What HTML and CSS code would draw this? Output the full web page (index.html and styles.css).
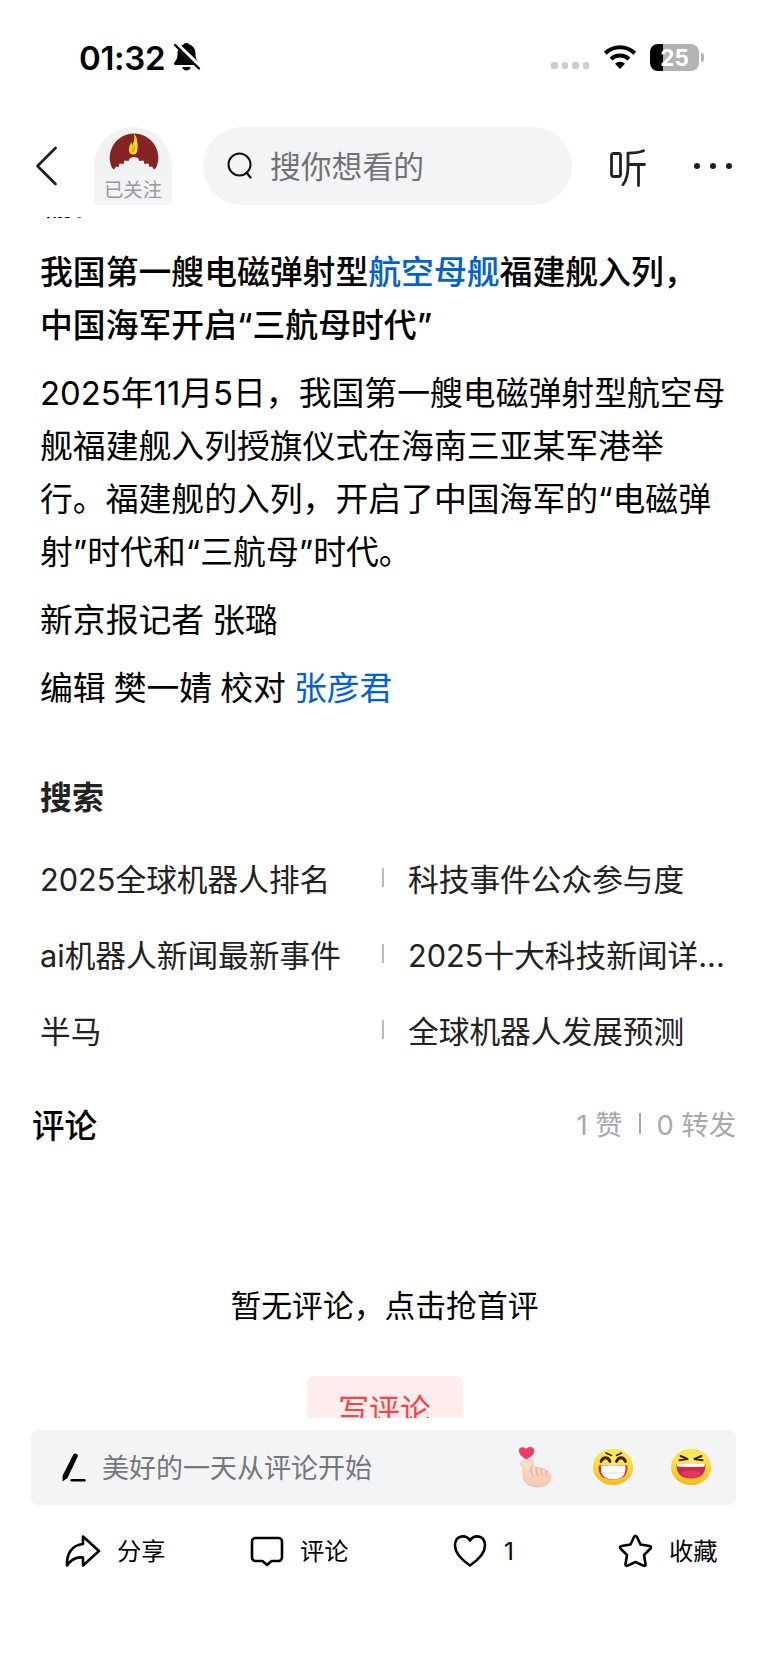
FILE: index.html
```
<!DOCTYPE html>
<html lang="zh-CN">
<head>
    <meta charset="UTF-8">
    <title>新闻详情</title>
    <link rel="stylesheet" href="styles.css">
</head>
<body>
    <div class="status-bar">
        <div class="time">01:32</div>
        <svg class="bell" width="28" height="30" viewBox="0 0 28 30">
            <path d="M13.500 1c1.800 0 2.800.8 3.200 1.800C20.500 4 22.500 7.500 22.500 11.500c0 5 1.200 6.500 2.800 8.500 1.200 1.500.7 3-1 3H2.700c-1.700 0-2.200-1.500-1-3C3.300 18 4.500 16.500 4.500 11.500c0-4 2-7.500 5.800-8.700C10.700 1.800 11.700 1 13.500 1z"/>
            <path d="M9.300 25h8.400c-.3 2-2 3.500-4.200 3.500S9.600 27 9.300 25z"/>
            <path d="M1.500 .5l27 26" stroke="#fff" stroke-width="5"/>
            <path d="M2 3l24 23.500" stroke="#000" stroke-width="2.400" stroke-linecap="round"/>
        </svg>
        <div class="status-right">
            <div class="signal"><i></i><i></i><i></i><i></i></div>
            <svg class="wifi" width="34" height="26" viewBox="0 0 34 26">
                <path d="M2.300 9.200a21 21 0 0 1 29.400 0M8 15a13 13 0 0 1 18 0" fill="none" stroke="#000" stroke-width="4"/>
                <path d="M17 25l-5-5.200a7.200 7.200 0 0 1 10 0z"/>
            </svg>
            <div class="battery"><span>25</span></div>
            <div class="battery-cap"></div>
        </div>
    </div>

    <div class="nav">
        <svg class="back" width="24" height="40" viewBox="0 0 24 40">
            <path d="M20.500 2L2.500 20l18 18" fill="none" stroke="#222" stroke-width="2.800" stroke-linecap="round" stroke-linejoin="round"/>
        </svg>
        <div class="source">
            <svg class="source-logo" width="78" height="47" viewBox="0 0 78 47">
                <path d="M0 47V39a39 39 0 0 1 78 0v8z" fill="#f1f2f2"/>
                <path d="M18 41A24.300 24.300 0 1 1 62 41l-2 1.500-2-3-2.500.5-1-3.500-4 .5-1-3.500-4 .5-1.500-3-4-1-4 1-1.500 3-4-.5-1 3.500-4-.5-1 3.500-2.500-.5-2 3z" fill="#842522"/>
                <path d="M40 6.500c3.500 4 3 7.500 3.500 10.500.5 4.500 0 10.500-4 10.500-4.500 0-5.500-4-4-8 .5-1.800 1.300-2.800 1.500-4.500 1 1.300 1 2.800 1 4C39.500 16 41 12 40 6.500z" fill="#f8dc18"/>
                <path d="M38.500 26c-1.500-3 .5-5.500 2-8.500 1 4 .8 7-2 8.500z" fill="#eba21a"/>
            </svg>
            <div class="followed">已关注</div>
        </div>
        <div class="search-box">
            <svg width="26" height="28" viewBox="0 0 26 28">
                <circle cx="12.500" cy="12.500" r="11" fill="none" stroke="#111" stroke-width="2"/>
                <path d="M19.500 20.500l4 5" stroke="#111" stroke-width="2.200" stroke-linecap="round"/>
            </svg>
            <span>搜你想看的</span>
        </div>
        <svg class="listen" width="36" height="38" viewBox="0 0 36 38">
            <g fill="none" stroke="#222" stroke-width="2.800" stroke-linecap="round" stroke-linejoin="round">
                <rect x="1.500" y="4.500" width="9" height="23" rx="2"/>
                <path d="M33.500 1.700c-4 1.700-9 2.300-15.500 2.500v13c0 8-1.500 14-5 18.500M18 15.500h16.500M28.500 15.500v21"/>
            </g>
        </svg>
        <div class="more"><i></i><i></i><i></i></div>
    </div>

    <div class="scroll">
        <div class="cut-line"><p>输。</p></div>
        <div class="article">
            <h2>我国第一艘电磁弹射型<a>航空母舰</a>福建舰入列，<br>中国海军开启“三航母时代”</h2>
            <p>2025年11月5日，我国第一艘电磁弹射型航空母<br>舰福建舰入列授旗仪式在海南三亚某军港举<br>行。福建舰的入列，开启了中国海军的“电磁弹<br>射”时代和“三航母”时代。</p>
            <p>新京报记者 张璐</p>
            <p>编辑 樊一婧 校对 <a>张彦君</a></p>
        </div>

        <div class="related">
            <h3>搜索</h3>
            <div class="related-row"><span>2025全球机器人排名</span><i></i><span>科技事件公众参与度</span></div>
            <div class="related-row"><span>ai机器人新闻最新事件</span><i></i><span>2025十大科技新闻详...</span></div>
            <div class="related-row"><span>半马</span><i></i><span>全球机器人发展预测</span></div>
        </div>

        <div class="comments-head">
            <h3>评论</h3>
            <div class="counts"><span>1 赞</span><i></i><span>0 转发</span></div>
        </div>
        <div class="empty">暂无评论，点击抢首评</div>
        <div class="write">写评论</div>
    </div>

    <div class="comment-bar">
        <svg class="pen" width="24" height="29" viewBox="0 0 24 29">
            <path d="M11.500 1.200c1-1.800 5.200 0 4.300 2L5.500 25 .5 28.500l.2-6z"/>
            <path d="M9.500 27.300h13" stroke="#000" stroke-width="2.400" stroke-linecap="round"/>
        </svg>
        <span>美好的一天从评论开始</span>
        <div class="emojis">
            <svg width="34" height="42" viewBox="0 0 34 42">
                <defs>
                    <linearGradient id="skin" x1="0" y1="0" x2="0" y2="1">
                        <stop offset="0" stop-color="#fde3d2"/>
                        <stop offset="1" stop-color="#f7c6ae"/>
                    </linearGradient>
                    <radialGradient id="face" cx=".5" cy=".3" r=".7">
                        <stop offset="0" stop-color="#ffec70"/>
                        <stop offset=".65" stop-color="#fddd35"/>
                        <stop offset="1" stop-color="#fbb216"/>
                    </radialGradient>
                </defs>
                <path d="M8.500 13.500C4 11 .5 7.500.8 4 1.300.8 6 0 8.300 3c2.800-3.300 8-2 8 1.700 0 3.800-4.300 6.800-7.800 8.800z" fill="#f33b66"/>
                <path d="M4 15.500c1.500-1.200 3.500-.8 4.800.8 1.700-2.500 4-3.200 5.700-2.200 1.800 1.500.3 4.200-1.500 7 2-1.300 4-1 5 .5 2-1 4-.3 5 1.200 2-.7 4 .2 5 1.800 3.500 1 5.300 4 4.800 7.400-.8 5.500-6 9-13.300 9-9 0-14-4-14.500-12V20.500C2 20 2 17 4 15.500z" fill="url(#skin)" stroke="#eeb398" stroke-width=".7"/>
                <path d="M13 21.500q-1 5 2 8.500M18 22q-.5 4 1.500 7.500M23 23q-.2 3.500 1.500 6.500M28 25q-.5 2.500.8 5" fill="none" stroke="#e0a288" stroke-width="1" stroke-linecap="round"/>
            </svg>
            <svg width="42" height="38" viewBox="0 0 42 38">
                <ellipse cx="21" cy="19" rx="20" ry="18" fill="url(#face)"/>
                <path d="M14 5l5.500 2.500M29.500 5l-5 2.500" fill="none" stroke="#39200c" stroke-width="1.500" stroke-linecap="round"/>
                <path d="M9 13.500c2-5 7-5 9 0M24.500 13.500c2-5 7-5 9 0" fill="none" stroke="#39200c" stroke-width="2.800" stroke-linecap="round"/>
                <path d="M6.500 17.500c5-.8 24-.8 29 0C36 28 31 31.500 21 31.500S6 28 6.500 17.500z" fill="#c82c55"/>
                <path d="M9 17.800c6-.8 18.500-.8 24.500 0 .2 9.500-2.500 13.500-12.200 13.500S8.700 27.300 9 17.800z" fill="#fff"/>
                <path d="M9 24.500c7 1 17 1 24 0" fill="none" stroke="#d9dce2" stroke-width="1"/>
            </svg>
            <svg width="42" height="38" viewBox="0 0 42 38">
                <ellipse cx="21" cy="19" rx="20" ry="18" fill="url(#face)"/>
                <path d="M10.500 8l7 3-8 1.200M31.500 8l-7 3 8 1.200" fill="none" stroke="#39200c" stroke-width="2" stroke-linecap="round" stroke-linejoin="round"/>
                <path d="M6.500 16c7-.5 22-.5 29 0C36 25.500 31 30.500 21 30.500S6 25.500 6.500 16z" fill="#c92a52"/>
                <path d="M11 25c5-3 15-3 20 0-2 3.500-5.500 5-10 5s-8-1.500-10-5z" fill="#e63660"/>
                <path d="M7 16c7-.8 21-.8 28 0l-.5 2.500c-6 .6-21 .6-27 0z" fill="#fff"/>
            </svg>
        </div>
    </div>

    <div class="actions">
        <div class="action share">
            <svg width="36" height="32" viewBox="0 0 36 32">
                <path d="M18 1.500L34 16 18 30.500v-8C10.500 21.500 6 24.500 2 30.500 1.500 18.500 7 10 18 9z"/>
            </svg>
            <span>分享</span>
        </div>
        <div class="action reply">
            <svg width="34" height="32" viewBox="0 0 34 32">
                <path d="M5.500 3h23a3.500 3.500 0 0 1 3.500 3.500v16a3.500 3.500 0 0 1-3.500 3.500h-7L17 30l-4.500-4h-7A3.500 3.500 0 0 1 2 22.500v-16A3.500 3.500 0 0 1 5.500 3z"/>
            </svg>
            <span>评论</span>
        </div>
        <div class="action like">
            <svg width="34" height="32" viewBox="0 0 34 32">
                <path d="M17 5.500C13-.5 2-.5 2 10.500c0 8 7 14.500 15 20 8-5.500 15-12 15-20 0-11-11-11-15-5z"/>
            </svg>
            <span>1</span>
        </div>
        <div class="action fav">
            <svg width="35" height="34" viewBox="0 0 35 34">
                <path d="M16 3q1.500-2.500 3 0l3.500 7.500 9 1.500q2.500.7.800 2.800L26 21l1.500 9q.2 2.500-2.200 1.600L17.500 28l-7.800 3.600q-2.400.9-2.200-1.600L9 21l-6.300-6.200Q1 12.700 3.500 12l9-1.500z"/>
            </svg>
            <span>收藏</span>
        </div>
    </div>
</body>
</html>
```

FILE: styles.css
```
* { margin: 0; padding: 0; box-sizing: border-box; }
body { font-family: Inter, 'Noto Sans CJK SC', sans-serif; background: #fff; color: #000; width: 769px; height: 1665px; overflow: hidden; display: flex; flex-direction: column; }
svg { display: block; flex-shrink: 0; }

.status-bar { height: 127px; padding: 42px 65px 0 79px; display: flex; align-items: flex-start; }
.time { font-size: 33px; line-height: 32px; font-weight: 600; letter-spacing: -0.300px; width: 87px; white-space: nowrap; }
.bell { margin-left: 7px; }
.status-right { margin-left: auto; display: flex; align-items: flex-start; }
.signal { display: flex; gap: 4px; margin: 20px 14px 0 0; }
.signal i { width: 6.500px; height: 7px; border-radius: 2.500px; background: #ccc; }
.wifi { margin-top: 2px; margin-right: 13px; }
.battery { width: 49px; height: 27px; margin-top: 2px; border-radius: 8px; background: linear-gradient(90deg, #000 12.500px, #b3b3b3 12.500px); color: #fff; font-size: 22.500px; font-weight: 700; line-height: 27px; text-align: center; }
.battery-cap { width: 3px; height: 9px; margin: 11px 0 0 2px; border-radius: 0 4px 4px 0; background: #b3b3b3; }

.nav { height: 78px; padding: 0 37px 0 35px; display: flex; align-items: center; flex-shrink: 0; }
.source { width: 78px; height: 78px; margin-left: 35px; }
.followed { height: 31px; background: #f3f4f6; border-radius: 0 0 5px 5px; color: #97999d; font-size: 19.300px; line-height: 33px; text-align: center; }
.search-box { width: 369px; height: 78px; margin-left: 31px; padding-left: 24px; border-radius: 39px; background: #f3f4f6; display: flex; align-items: center; gap: 17px; }
.search-box span { color: #707276; font-size: 30.800px; padding-bottom: 3px; }
.listen { margin: 3px 0 0 38px; }
.more { margin-left: auto; display: flex; gap: 9.500px; }
.more i { width: 6.300px; height: 6.300px; border-radius: 50%; background: #222; }

.scroll { height: 1201px; margin-top: 12px; overflow: hidden; flex-shrink: 0; }
.cut-line { height: 13px; padding-left: 40px; font-size: 32.850px; line-height: 53px; display: flex; align-items: flex-end; overflow: hidden; }
.article { margin-top: 16px; padding: 0 40px; font-size: 32.850px; line-height: 53px; word-spacing: -1.200px; white-space: nowrap; }
.article h2 { font-size: inherit; font-weight: 500; }
.article p { margin-top: 15px; }
.article a { color: #0062d2; }

.related { padding: 0 40px; }
.related h3 { margin: 56px 0 15px; font-size: 32px; line-height: 53px; font-weight: 700; color: #222; }
.related-row { height: 76px; display: grid; grid-template-columns: 342px 26px 1fr; align-items: center; font-size: 30.700px; color: #222; white-space: nowrap; }
.related-row i { width: 2px; height: 19px; background: #bbb; }

.comments-head { margin-top: 31px; padding: 0 33px 0 32px; height: 50px; display: flex; align-items: center; justify-content: space-between; }
.comments-head h3 { font-size: 32.500px; font-weight: 500; }
.counts { display: flex; align-items: center; font-size: 27.300px; color: #a6a8ac; }
.counts i { width: 2px; height: 21px; margin: 0 16px; background: #a6a8ac; }
.empty { margin-top: 133px; height: 50px; line-height: 50px; text-align: center; font-size: 30.800px; }
.write { width: 156px; height: 76px; margin: 45px auto 0; border-radius: 7px; background: #ffeded; color: #ff4040; font-size: 30.800px; line-height: 68px; text-align: center; }

.comment-bar { width: 705px; height: 75px; margin: 12px 0 0 31px; padding: 0 24px 0 31px; border-radius: 7px; background: #f3f4f6; display: flex; align-items: center; flex-shrink: 0; }
.comment-bar > span { margin-left: 16px; padding-bottom: 2px; color: #75777a; font-size: 27px; }
.emojis { margin-left: auto; padding-bottom: 2px; display: flex; align-items: center; gap: 36px; }
.emojis svg:first-child { margin-right: 4px; }

.actions { height: 90px; padding-top: 2px; display: grid; grid-template-columns: 250px 203px 165px 1fr; align-items: center; }
.action { display: flex; align-items: center; font-size: 24.300px; gap: 16px; }
.action span { padding-bottom: 3px; }
.action path { fill: none; stroke: #000; stroke-width: 2.600; stroke-linejoin: round; }
.share { padding-left: 65px; }
.like { gap: 17px; }
.like span { padding-bottom: 0; }
```
